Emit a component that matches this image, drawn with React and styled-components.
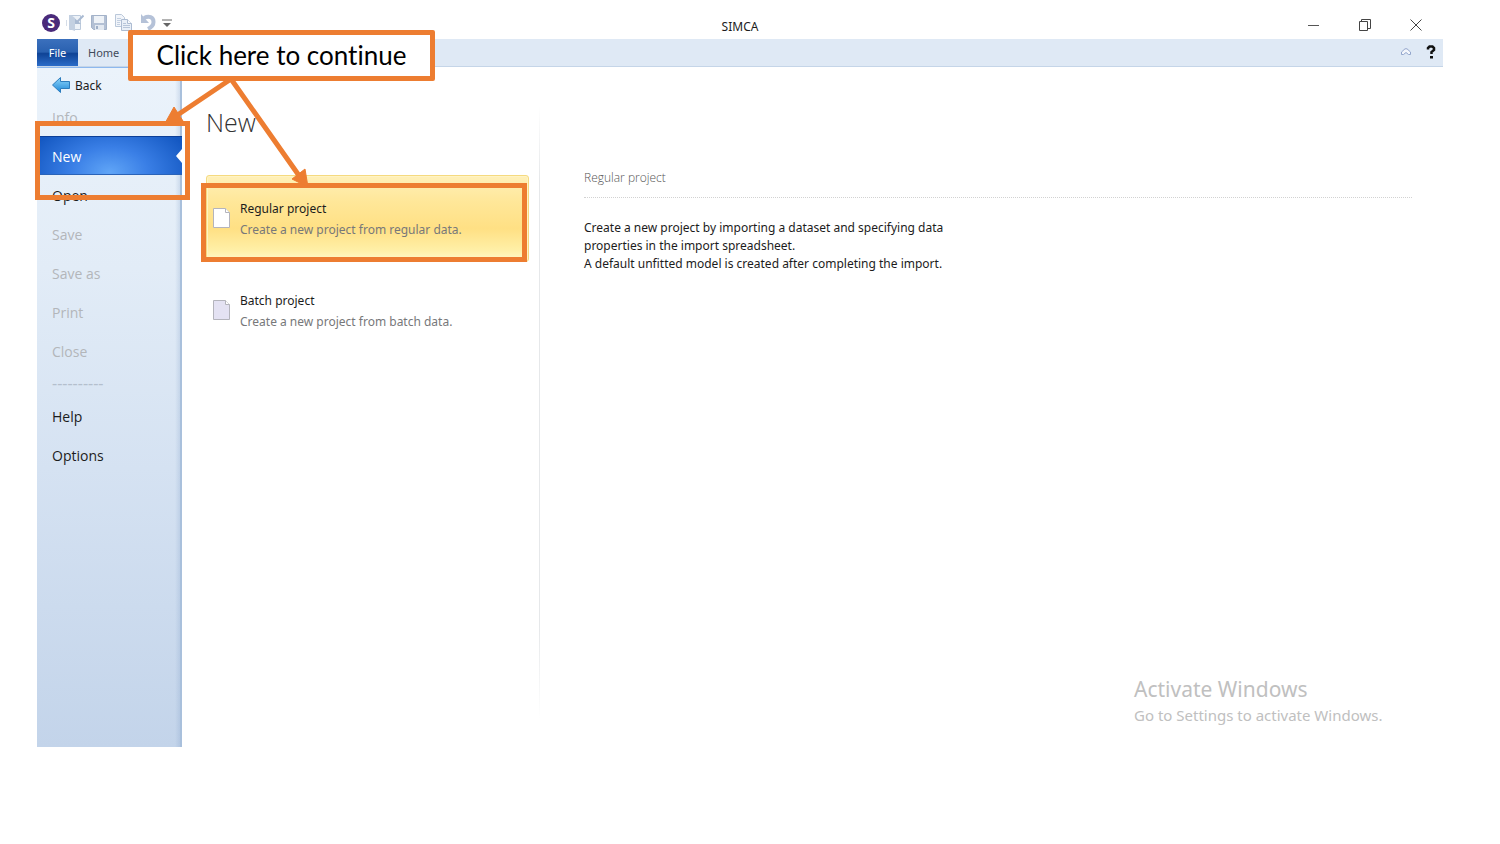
import React from "react";
import styled, { createGlobalStyle, css } from "styled-components";

const GlobalStyle = createGlobalStyle`
  *, *::before, *::after { box-sizing: border-box; }
  body {
    margin: 0;
    background: #fff;
    color: #1c1c1c;
    font-family: "Noto Sans", "Open Sans", sans-serif;
    font-size: 12px;
  }
  button { font: inherit; color: inherit; background: none; border: 0; padding: 0; text-align: left; }
  h1, h2, p, ul { margin: 0; padding: 0; font-weight: 400; }
  svg { display: block; }
`;

const accent = "#ed7d31";

const Window = styled.div`
  position: relative;
  margin: 8px 57px 0 37px;
`;

const TitleBar = styled.header`
  display: grid;
  grid-template-columns: 1fr auto 1fr;
  align-items: center;
  height: 31px;
`;

const QuickAccess = styled.div`
  display: flex;
  align-items: center;
  gap: 6px;
  padding: 0 0 1px 5px;
`;

const Logo = styled.span`
  width: 18px;
  height: 18px;
  border-radius: 50%;
  background: #4a2a7a;
  color: #fff;
  font-size: 14px;
  font-weight: 700;
  line-height: 18px;
  text-align: center;
`;

const IconButton = styled.button`
  display: grid;
  place-items: center;
  width: ${(p) => p.$width || 18}px;
  height: 20px;
`;

const AppTitle = styled.div`
  padding-top: 6px;
  font-size: 12px;
  line-height: 18px;
`;

const WindowControls = styled.div`
  display: flex;
  justify-content: flex-end;
  gap: 33px;
  padding: 2px 18px 0 0;
`;

const Ribbon = styled.nav`
  display: flex;
  align-items: stretch;
  height: 28px;
  background: #dfe9f5;
  border-bottom: 1px solid #c5d5e8;
`;

const Tab = styled.button`
  padding: 0 10px;
  font-size: 11px;
  color: #3f4a5a;
  ${(p) =>
    p.$file &&
    css`
      width: 41px;
      padding: 0;
      text-align: center;
      color: #fff;
      background: linear-gradient(#3b70bd 0%, #2a61b0 48%, #0f4396 54%, #2b6cc8 100%);
    `}
`;

const RibbonTools = styled.div`
  display: flex;
  align-items: center;
  gap: 10px;
  margin-left: auto;
  padding: 0 4px 2px 0;
`;

const Body = styled.div`
  display: flex;
  min-height: 680px;
`;

const Sidebar = styled.aside`
  flex: 0 0 145px;
  border-top: 1px solid #8db8ee;
  background:
    linear-gradient(90deg, transparent 138px, rgba(130, 160, 200, 0.25) 143px, #a9c0dc 143px),
    linear-gradient(#ebf3fb 0, #e2ecf7 200px, #d5e2f2 400px, #c3d4ea 100%);
`;

const BackButton = styled.button`
  display: flex;
  align-items: center;
  gap: 5px;
  height: 29px;
  padding: 5px 0 0 15px;
`;

const Menu = styled.ul`
  list-style: none;
`;

const MenuItem = styled.button`
  display: block;
  position: relative;
  width: 100%;
  height: 39px;
  padding: 2px 0 0 15px;
  font-family: "Open Sans", sans-serif;
  font-size: 14px;
  color: ${(p) => (p.disabled ? "#b3b6ba" : "#1c1c1c")};
  ${(p) =>
    p.$active &&
    css`
      color: #fff;
      border-top: 1px solid #0c3f98;
      border-bottom: 1px solid #2a63b8;
      background: radial-gradient(ellipse 85px 55px at 50% 95%, #60a5f7 0%, #3a7fe6 45%, #1458c2 100%);
      &::after {
        content: "";
        position: absolute;
        right: 0;
        top: 12px;
        border: 7px solid transparent;
        border-left: 0;
        border-right: 6px solid #fff;
      }
    `}
`;

const MenuSeparator = styled.li`
  height: 26px;
  padding-left: 15px;
  line-height: 26px;
  font-size: 16px;
  color: #b4bfcd;
`;

const Templates = styled.main`
  flex: 0 0 358px;
  padding: 37px 11px 0 24px;
  background: linear-gradient(transparent, #e6e8ea 12%, #e6e8ea 85%, transparent) right 38px / 1px 615px no-repeat;
`;

const Heading = styled.h1`
  height: 71px;
  font-family: "Open Sans", sans-serif;
  font-size: 25px;
  font-weight: 300;
  line-height: 36px;
  color: #333;
`;

const TemplateCard = styled.button`
  display: flex;
  align-items: center;
  gap: 9px;
  width: 100%;
  height: 87px;
  margin-bottom: 5px;
  padding: 0 6px;
  border: 1px solid transparent;
  border-radius: 3px;
  ${(p) =>
    p.$selected &&
    css`
      border-color: #f5da80;
      box-shadow: inset 0 0 0 1px #fff3c4;
      background: linear-gradient(#fff0b8 0%, #ffe799 30%, #ffe084 62%, #fff0a8 88%, #fff9cc 100%);
    `}
`;

const CardTitle = styled.span`
  display: block;
  line-height: 21px;
  color: #1c1c1c;
`;

const CardText = styled(CardTitle)`
  color: #77787a;
`;

const Details = styled.section`
  flex: 1;
  padding: 100px 31px 0 44px;
`;

const DetailsTitle = styled.h2`
  padding-bottom: 8px;
  border-bottom: 1px dotted #d2d2d2;
  font-family: "Open Sans", sans-serif;
  font-size: 12px;
  font-weight: 300;
  line-height: 22px;
  color: #555;
`;

const DetailsText = styled.p`
  padding-top: 21px;
  line-height: 18px;
`;

const Watermark = styled.div`
  position: absolute;
  right: 58px;
  bottom: 20px;
  width: 251px;
  color: #c0c0c0;
  font-size: 15px;
  line-height: 24px;
  white-space: nowrap;
`;

const WatermarkTitle = styled.div`
  font-size: 21px;
  line-height: 28px;
`;

const Highlight = styled.div`
  position: absolute;
  left: ${(p) => p.$left}px;
  top: ${(p) => p.$top}px;
  width: ${(p) => p.$width}px;
  height: 79px;
  border: 5px solid ${accent};
  pointer-events: none;
`;

const Callout = styled.div`
  position: absolute;
  left: 91px;
  top: 22px;
  width: 307px;
  height: 51px;
  border: 5px solid ${accent};
  border-radius: 2px;
  background: #fff;
  color: #000;
  font-family: Lato, sans-serif;
  font-size: 26px;
  font-variant-ligatures: none;
  line-height: 40px;
  text-align: center;
  white-space: nowrap;
`;

const Arrows = styled.svg`
  position: absolute;
  left: 123px;
  top: 67px;
  pointer-events: none;
`;

const ImportIcon = () => (
  <svg width="18" height="18" viewBox="0 0 18 18" aria-hidden="true">
    <path d="M3.500 1.500h11v14h-11z" fill="#edf2f8" stroke="#bccadc" />
    <path d="M3 1h2l4 3v13l-6-2z" fill="#c3d0e1" />
    <path d="M.5 6v6" stroke="#d5dde8" />
    <path d="M17.500 1.500L11 8" fill="none" stroke="#a9bad2" strokeWidth="2" />
    <path d="M9 4.500V10h6z" fill="#a9bad2" />
  </svg>
);

const SaveIcon = () => (
  <svg width="18" height="18" viewBox="0 0 18 18" aria-hidden="true">
    <path d="M1.500 1.500h15v14h-13l-2-2z" fill="#b3c0d4" stroke="#a3b2c9" />
    <path d="M4 2h10v7H4z" fill="#eef2f7" />
    <path d="M5 11h9v5H5z" fill="#e3e9f1" />
    <path d="M6 12h2v3H6z" fill="#9fafc7" />
  </svg>
);

const CopyIcon = () => (
  <svg width="18" height="18" viewBox="0 0 18 18" aria-hidden="true">
    <path d="M1.500.5h6l3 3v9h-9z" fill="#f2f5fa" stroke="#bac8da" />
    <path d="M3 4.500h4M3 6.500h4M3 8.500h3M3 10.500h3" stroke="#c3d0e1" />
    <path d="M7.500 5.500h6l4 4v7h-10z" fill="#e9eff7" stroke="#adbcd2" />
    <path d="M13.500 5.500v4h4" fill="#f7f9fc" stroke="#adbcd2" />
    <path d="M9 9.500h3M9 11.500h7M9 13.500h7" stroke="#b7c5d9" />
  </svg>
);

const UndoIcon = () => (
  <svg width="18" height="18" viewBox="0 0 18 18" aria-hidden="true">
    <path d="M6 4c5-2.500 9.500-1 9.500 4 0 3.500-2.500 5.500-5.500 7" fill="none" stroke="#b5c2d8" strokeWidth="4" />
    <path d="M3 0v9h8z" fill="#b5c2d8" />
  </svg>
);

const MoreIcon = () => (
  <svg width="10" height="8" viewBox="0 0 10 8" aria-hidden="true">
    <path d="M0 1h10" stroke="#666" />
    <path d="M1 4h8L5 8z" fill="#666" />
  </svg>
);

const MinimizeIcon = () => (
  <svg width="12" height="12" viewBox="0 0 12 12" aria-hidden="true">
    <path d="M0 6.500h11" stroke="#555" />
  </svg>
);

const RestoreIcon = () => (
  <svg width="12" height="12" viewBox="0 0 12 12" aria-hidden="true">
    <path d="M.5 2.500h8v9h-8zM2.500 2.500v-2h9v9h-3" fill="none" stroke="#444" />
  </svg>
);

const CloseIcon = () => (
  <svg width="12" height="12" viewBox="0 0 12 12" aria-hidden="true">
    <path d="M.5.5l11 11M11.500.5l-11 11" stroke="#444" />
  </svg>
);

const CollapseIcon = () => (
  <svg width="10" height="7" viewBox="0 0 10 7" aria-hidden="true">
    <path d="M.5 4L4 .8h2L9.500 4v2.500h-2L5 4.500l-2.500 2h-2z" fill="#f3f6fb" stroke="#93a6cc" />
  </svg>
);

const HelpIcon = () => (
  <svg width="10" height="14" viewBox="0 0 10 14" aria-hidden="true">
    <path d="M2 4.500V3l1.500-1.500h3L8 3v2L5.500 7v2" fill="none" stroke="#111" strokeWidth="2.500" />
    <path d="M4 11h3v2.500H4z" fill="#111" />
  </svg>
);

const BackIcon = () => (
  <svg width="18" height="16" viewBox="0 0 18 16" aria-hidden="true">
    <defs>
      <linearGradient id="backFill" x1="0" y1="0" x2="0" y2="1">
        <stop offset="0" stopColor="#8fd6fa" />
        <stop offset="1" stopColor="#1c86d8" />
      </linearGradient>
    </defs>
    <path d="M.5 8l8-7.500v4h9v7h-9v4z" fill="url(#backFill)" stroke="#2c7cbd" strokeLinejoin="round" />
  </svg>
);

const PageIcon = ({ fill }) => (
  <svg width="18" height="21" viewBox="0 0 18 21" aria-hidden="true">
    <path d="M.5.5h12l4 4v15H.5z" fill={fill} stroke="#b4b4bc" />
    <path d="M12.500.5v4h4" fill="#fff" stroke="#b4b4bc" />
  </svg>
);

const topItems = [
  { label: "Info", disabled: true },
  { label: "New", active: true },
  { label: "Open" },
  { label: "Save", disabled: true },
  { label: "Save as", disabled: true },
  { label: "Print", disabled: true },
  { label: "Close", disabled: true },
];

const bottomItems = [{ label: "Help" }, { label: "Options" }];

const templates = [
  { title: "Regular project", text: "Create a new project from regular data.", fill: "#fff", selected: true },
  { title: "Batch project", text: "Create a new project from batch data.", fill: "#e4e2f3" },
];

const renderItem = (item) => (
  <li key={item.label}>
    <MenuItem type="button" disabled={item.disabled} $active={item.active}>
      {item.label}
    </MenuItem>
  </li>
);

export default function App() {
  return (
    <>
      <GlobalStyle />
      <Window>
        <TitleBar>
          <QuickAccess>
            <Logo>S</Logo>
            <IconButton type="button" aria-label="Import"><ImportIcon /></IconButton>
            <IconButton type="button" aria-label="Save project"><SaveIcon /></IconButton>
            <IconButton type="button" aria-label="Copy"><CopyIcon /></IconButton>
            <IconButton type="button" aria-label="Undo"><UndoIcon /></IconButton>
            <IconButton type="button" aria-label="Customize toolbar" $width={10}><MoreIcon /></IconButton>
          </QuickAccess>
          <AppTitle>SIMCA</AppTitle>
          <WindowControls>
            <IconButton type="button" aria-label="Minimize"><MinimizeIcon /></IconButton>
            <IconButton type="button" aria-label="Restore"><RestoreIcon /></IconButton>
            <IconButton type="button" aria-label="Close window"><CloseIcon /></IconButton>
          </WindowControls>
        </TitleBar>

        <Ribbon>
          <Tab type="button" $file>File</Tab>
          <Tab type="button">Home</Tab>
          <RibbonTools>
            <IconButton type="button" aria-label="Collapse ribbon" $width={14}><CollapseIcon /></IconButton>
            <IconButton type="button" aria-label="Help topics" $width={16}><HelpIcon /></IconButton>
          </RibbonTools>
        </Ribbon>

        <Body>
          <Sidebar>
            <BackButton type="button">
              <BackIcon />
              Back
            </BackButton>
            <Menu>
              {topItems.map(renderItem)}
              <MenuSeparator>----------</MenuSeparator>
              {bottomItems.map(renderItem)}
            </Menu>
          </Sidebar>

          <Templates>
            <Heading>New</Heading>
            {templates.map((t) => (
              <TemplateCard key={t.title} type="button" $selected={t.selected}>
                <PageIcon fill={t.fill} />
                <span>
                  <CardTitle>{t.title}</CardTitle>
                  <CardText>{t.text}</CardText>
                </span>
              </TemplateCard>
            ))}
          </Templates>

          <Details>
            <DetailsTitle>Regular project</DetailsTitle>
            <DetailsText>
              Create a new project by importing a dataset and specifying data
              <br />
              properties in the import spreadsheet.
              <br />
              A default unfitted model is created after completing the import.
            </DetailsText>
          </Details>
        </Body>

        <Watermark>
          <WatermarkTitle>Activate Windows</WatermarkTitle>
          Go to Settings to activate Windows.
        </Watermark>

        <Highlight $left={-2} $top={113} $width={155} />
        <Highlight $left={164} $top={175} $width={326} />
        <Arrows width="160" height="120" viewBox="0 0 160 120" aria-hidden="true">
          <path d="M71 4L16 41M71 4l69 98" fill="none" stroke={accent} strokeWidth="5" />
          <path d="M4 50l10-18 9 14zM148 112l-16-8 13-10z" fill={accent} stroke={accent} />
        </Arrows>
        <Callout>Click here to continue</Callout>
      </Window>
    </>
  );
}
